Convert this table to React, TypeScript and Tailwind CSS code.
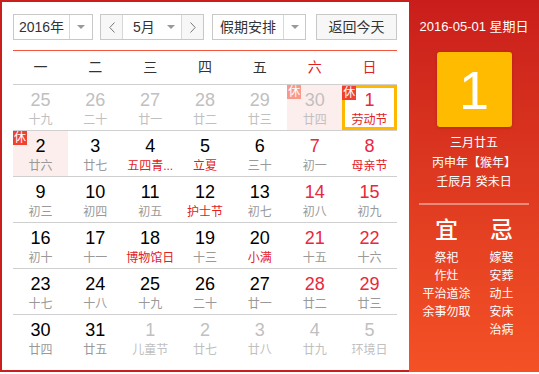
type Day = {
  n: number;
  lunar: string;
  other?: boolean;
  fest?: boolean;
  rest?: boolean;
  today?: boolean;
};

const rows: Day[][] = [
  [
    { n: 25, lunar: "十九", other: true },
    { n: 26, lunar: "二十", other: true },
    { n: 27, lunar: "廿一", other: true },
    { n: 28, lunar: "廿二", other: true },
    { n: 29, lunar: "廿三", other: true },
    { n: 30, lunar: "廿四", other: true, rest: true },
    { n: 1, lunar: "劳动节", fest: true, rest: true, today: true },
  ],
  [
    { n: 2, lunar: "廿六", rest: true },
    { n: 3, lunar: "廿七" },
    { n: 4, lunar: "五四青...", fest: true },
    { n: 5, lunar: "立夏", fest: true },
    { n: 6, lunar: "三十" },
    { n: 7, lunar: "初一" },
    { n: 8, lunar: "母亲节", fest: true },
  ],
  [
    { n: 9, lunar: "初三" },
    { n: 10, lunar: "初四" },
    { n: 11, lunar: "初五" },
    { n: 12, lunar: "护士节", fest: true },
    { n: 13, lunar: "初七" },
    { n: 14, lunar: "初八" },
    { n: 15, lunar: "初九" },
  ],
  [
    { n: 16, lunar: "初十" },
    { n: 17, lunar: "十一" },
    { n: 18, lunar: "博物馆日", fest: true },
    { n: 19, lunar: "十三" },
    { n: 20, lunar: "小满", fest: true },
    { n: 21, lunar: "十五" },
    { n: 22, lunar: "十六" },
  ],
  [
    { n: 23, lunar: "十七" },
    { n: 24, lunar: "十八" },
    { n: 25, lunar: "十九" },
    { n: 26, lunar: "二十" },
    { n: 27, lunar: "廿一" },
    { n: 28, lunar: "廿二" },
    { n: 29, lunar: "廿三" },
  ],
  [
    { n: 30, lunar: "廿四" },
    { n: 31, lunar: "廿五" },
    { n: 1, lunar: "儿童节", other: true },
    { n: 2, lunar: "廿七", other: true },
    { n: 3, lunar: "廿八", other: true },
    { n: 4, lunar: "廿九", other: true },
    { n: 5, lunar: "环境日", other: true },
  ],
];

const weekdays = ["一", "二", "三", "四", "五", "六", "日"];

const FONT = "[font-family:'Liberation_Sans','Noto_Sans_CJK_SC',sans-serif]";

function Caret() {
  return (
    <svg width="8" height="4" viewBox="0 0 8 4">
      <path d="M0 0 L8 0 L4 4 Z" fill="#999" />
    </svg>
  );
}

function Chevron({ dir }: { dir: "l" | "r" }) {
  return (
    <svg width="6" height="11" viewBox="0 0 6 11">
      <polyline
        points={dir === "l" ? "5.5,0.5 0.8,5.5 5.5,10.5" : "0.5,0.5 5.2,5.5 0.5,10.5"}
        fill="none"
        stroke="#777"
        strokeWidth="1"
      />
    </svg>
  );
}

function Cell({ d, col }: { d: Day; col: number }) {
  const weekend = col >= 5;
  let numColor = "text-black";
  if (d.other) numColor = "text-[#c0c0c0]";
  else if (weekend || d.today) numColor = "text-[#e8283c]";
  let lunarColor = "text-[#999]";
  if (d.other) lunarColor = "text-[#c0c0c0]";
  else if (d.fest) lunarColor = "text-[#e3201d]";
  if (d.today) lunarColor = "text-[#e3201d]";

  const bg = d.rest && !d.today ? "bg-[#fdeeee]" : "bg-white";
  const frame = d.today ? "border-[3px] border-[#ffb700] pt-[2px]" : "pt-[5px]";
  const badgePos = d.today ? "-left-[3px] -top-[2px]" : "left-0 top-0";

  return (
    <div className={`relative h-[45px] flex flex-col items-center ${bg} ${frame}`}>
      {d.rest && (
        <span
          className={`absolute ${badgePos} w-[14px] h-[14px] flex items-center justify-center text-[12px] leading-none text-white ${
            d.other ? "bg-[#f9998a]" : "bg-[#f0412f]"
          }`}
        >
          休
        </span>
      )}
      <span className={`text-[18px] leading-[20px] ${numColor}`}>{d.n}</span>
      <span className={`mt-[3px] text-[12px] leading-[14px] whitespace-nowrap ${lunarColor}`}>
        {d.lunar}
      </span>
    </div>
  );
}

export default function App() {
  return (
    <div className={`flex w-[539px] h-[372px] bg-white ${FONT}`}>
      <div className="w-[409px] h-[372px] border-l-2 border-t-2 border-b-2 border-[#c9201d] pl-[11px] pt-[12px]">
        <div className="flex items-center h-[26px] text-[14px] text-[#333]">
          <div className="flex w-[80px] h-[26px] border border-[#c8c8c8]">
            <div className="w-[55px] flex items-center justify-center">2016年</div>
            <div className="flex-1 border-l border-[#d8d8d8] flex items-center justify-center">
              <Caret />
            </div>
          </div>
          <div className="ml-[7px] flex w-[104px] h-[26px] border border-[#c8c8c8]">
            <div className="w-[22px] bg-[#f7f7f7] border-r border-[#d8d8d8] flex items-center justify-center">
              <Chevron dir="l" />
            </div>
            <div className="flex-1 flex items-center pl-[10px] pr-[6px] justify-between">
              <span>5月</span>
              <Caret />
            </div>
            <div className="w-[22px] bg-[#f7f7f7] border-l border-[#d8d8d8] flex items-center justify-center">
              <Chevron dir="r" />
            </div>
          </div>
          <div className="ml-[8px] flex w-[94px] h-[26px] border border-[#c8c8c8]">
            <div className="w-[70px] flex items-center justify-center">假期安排</div>
            <div className="flex-1 border-l border-[#d8d8d8] flex items-center justify-center">
              <Caret />
            </div>
          </div>
          <div className="ml-[10px] w-[81px] h-[26px] border border-[#c8c8c8] bg-[#f7f7f7] flex items-center justify-center">
            返回今天
          </div>
        </div>

        <div className="w-[384px] mt-[10px] border-t border-[#f0553e]">
          <div className="grid grid-cols-7 h-[33px] items-center text-[14px]">
            {weekdays.map((w, i) => (
              <div key={w} className={`text-center ${i >= 5 ? "text-[#e3201d]" : "text-[#333]"}`}>
                {w}
              </div>
            ))}
          </div>
          {rows.map((row, r) => (
            <div key={r} className="grid grid-cols-7 border-t border-[#cfcfcf]">
              {row.map((d, c) => (
                <Cell key={c} d={d} col={c} />
              ))}
            </div>
          ))}
        </div>
      </div>

      <div className="w-[130px] h-[372px] bg-gradient-to-b from-[#c91d1b] to-[#f45126] text-white flex flex-col items-center">
        <div className="mt-[19px] text-[13px] leading-[16px]">2016-05-01 星期日</div>
        <div className="mt-[17px] w-[75px] h-[75px] rounded-[3px] bg-[#ffbb00] shadow-[0_1px_3px_rgba(120,20,0,0.35)] flex items-center justify-center text-[54px] leading-none">
          1
        </div>
        <div className="mt-[7px] flex flex-col items-center text-[12px] leading-[19.5px]">
          <span>三月廿五</span>
          <span>丙申年【猴年】</span>
          <span>壬辰月 癸未日</span>
        </div>
        <div className="mt-[10px] w-[110px] h-[2px] bg-white/40" />
        <div className="mt-[12px] w-[110px] grid grid-cols-2 text-center">
          <div className="flex flex-col items-center">
            <span className="text-[23px] leading-[26px] font-medium">宜</span>
            <div className="mt-[6px] flex flex-col items-center text-[12px] leading-[18px]">
              <span>祭祀</span>
              <span>作灶</span>
              <span>平治道涂</span>
              <span>余事勿取</span>
            </div>
          </div>
          <div className="flex flex-col items-center">
            <span className="text-[23px] leading-[26px] font-medium">忌</span>
            <div className="mt-[6px] flex flex-col items-center text-[12px] leading-[18px]">
              <span>嫁娶</span>
              <span>安葬</span>
              <span>动土</span>
              <span>安床</span>
              <span>治病</span>
            </div>
          </div>
        </div>
      </div>
    </div>
  );
}
